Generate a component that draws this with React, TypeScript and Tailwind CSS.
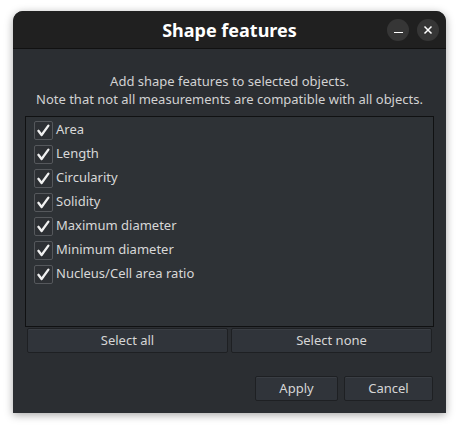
import React from "react";

const features = [
  "Area",
  "Length",
  "Circularity",
  "Solidity",
  "Maximum diameter",
  "Minimum diameter",
  "Nucleus/Cell area ratio",
];

function Check() {
  return (
    <div className="w-[19px] h-[19px] rounded-[2px] border border-[#55585c] bg-[#2d3034] flex items-center justify-center">
      <svg width="17" height="17" viewBox="0 0 17 17">
        <path d="M3.4 8.8 L6.6 13 L13.4 3.6" fill="none" stroke="#f0f0f0" strokeWidth="2.3" strokeLinecap="round" strokeLinejoin="round" />
      </svg>
    </div>
  );
}

function Btn({ label, className }: { label: string; className?: string }) {
  return (
    <button className={"h-[25px] rounded-[2px] border border-[#1e2023] bg-[#30343a] text-[13px] leading-none text-[#d6d6d6] shadow-[inset_0_1px_0_rgba(255,255,255,0.05)] " + (className ?? "")}>
      {label}
    </button>
  );
}

export default function App() {
  return (
    <div className="w-[460px] h-[430px] bg-white pt-[11px] pl-[13px]" style={{ fontFamily: '"Noto Sans", sans-serif' }}>
      <div className="w-[433px] h-[402px] flex flex-col rounded-t-[10px] overflow-hidden shadow-[0_2px_8px_rgba(0,0,0,0.35)] bg-[#2b2e32]">
        <div className="h-[38px] shrink-0 bg-[#202020] border-b border-[#111] flex items-center relative">
          <div className="flex-1 text-center text-white font-bold text-[18px] leading-none">Shape features</div>
          <div className="absolute right-[7px] top-[8px] flex gap-[8px]">
            <div className="w-[22px] h-[22px] rounded-full bg-[#363636] flex items-center justify-center">
              <div className="w-[9px] h-[1.5px] bg-white mt-[5px]" />
            </div>
            <div className="w-[22px] h-[22px] rounded-full bg-[#363636] flex items-center justify-center">
              <svg width="10" height="10" viewBox="0 0 10 10">
                <path d="M1.5 1.5 L8.5 8.5 M8.5 1.5 L1.5 8.5" stroke="white" strokeWidth="1.5" />
              </svg>
            </div>
          </div>
        </div>
        <div className="flex-1 flex flex-col px-[12px]">
          <div className="mt-[23px] text-center text-[13px] leading-[18px] text-[#d2d2d2]">
            <div>Add shape features to selected objects.</div>
            <div>Note that not all measurements are compatible with all objects.</div>
          </div>
          <div className="mt-[8px] h-[211px] border border-[#101112] bg-[#2e3236] pt-[1px] pl-[8px] flex flex-col">
            {features.map((f) => (
              <div key={f} className="h-[24px] flex items-center gap-[3px]">
                <Check />
                <span className="text-[13px] text-[#d8d8d8]">{f}</span>
              </div>
            ))}
          </div>
          <div className="mt-[1px] px-[2px] flex gap-[3px]">
            <Btn label="Select all" className="flex-1" />
            <Btn label="Select none" className="flex-1" />
          </div>
          <div className="mt-[23px] flex justify-end gap-[6px] pr-[1px]">
            <Btn label="Apply" className="w-[83px]" />
            <Btn label="Cancel" className="w-[89px]" />
          </div>
        </div>
      </div>
    </div>
  );
}
